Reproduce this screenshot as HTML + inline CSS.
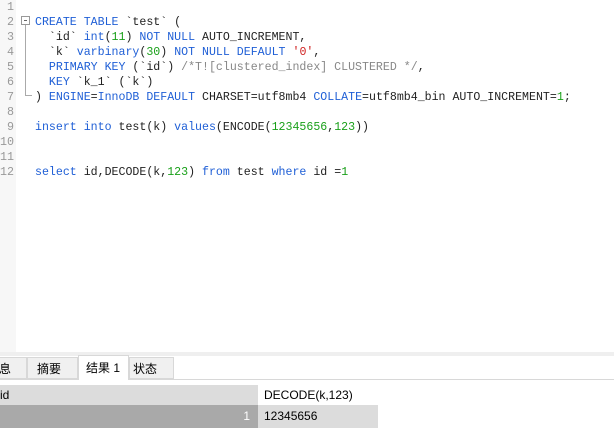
<!DOCTYPE html><html><head><style>
body{margin:0;width:614px;height:442px;overflow:hidden;background:#fff;font-family:"Liberation Sans","Noto Sans CJK SC",sans-serif;position:relative}
.g{position:absolute;left:0;top:0;width:16px;height:352px;background:#f7f7f7}
.ln{position:absolute;left:0;width:14px;text-align:right;font:11.7px "Liberation Mono",monospace;color:#999}
.c{position:absolute;left:35px;font:11.6px "Liberation Mono",monospace;color:#222;white-space:pre;line-height:15px}
.k{color:#1f5fd6}.n{color:#1aa01a}.s{color:#d02020}.m{color:#888}
.tab{position:absolute;top:357px;height:22px;background:#f0f0f0;border:1px solid #d8d8d8;font-size:12px;line-height:22px;box-sizing:border-box;padding-left:5px}
</style></head><body>
<div class="g"></div>
<div style="position:absolute;left:0;top:352px;width:614px;height:4px;background:#efefef"></div>
<div style="position:absolute;left:0;top:379px;width:614px;height:1px;background:#d8d8d8"></div>
<div class="tab" style="left:-12px;width:39px;padding-left:10px">息</div>
<div class="tab" style="left:27px;width:51px;padding-left:9px">摘要</div>
<div class="tab" style="left:78px;width:51px;top:355px;height:25px;background:#fff;border-bottom:none;padding-left:7px;line-height:24px">结果 1</div>
<div class="tab" style="left:129px;width:45px;padding-left:3px">状态</div>
<div style="position:absolute;left:0;top:385px;width:258px;height:20px;background:#dcdcdc;font-size:12px;line-height:20px">id</div>
<div style="position:absolute;left:258px;top:385px;width:120px;height:20px;background:#fff;font-size:12px;line-height:20px;padding-left:6px;box-sizing:border-box">DECODE(k,123)</div>
<div style="position:absolute;left:0;top:405px;width:258px;height:23px;background:#a9a9a9;color:#fff;font-size:12px;line-height:23px;text-align:right;padding-right:8px;box-sizing:border-box">1</div>
<div style="position:absolute;left:258px;top:405px;width:120px;height:23px;background:#dcdcdc;font-size:12px;line-height:23px;padding-left:6px;box-sizing:border-box">12345656</div>
<div style="position:absolute;left:21px;top:16px;width:9px;height:9px;border:1px solid #999;box-sizing:border-box;background:#fff"></div>
<div style="position:absolute;left:24px;top:20px;width:3px;height:1px;background:#666"></div>
<div style="position:absolute;left:25px;top:25px;width:1px;height:71px;background:#aaa"></div>
<div style="position:absolute;left:25px;top:95px;width:7px;height:1px;background:#aaa"></div>
<div style="position:absolute;top:0;left:0">
<div class="ln" style="top:0">1</div><div class="ln" style="top:15px">2</div><div class="ln" style="top:30px">3</div><div class="ln" style="top:45px">4</div><div class="ln" style="top:60px">5</div><div class="ln" style="top:75px">6</div><div class="ln" style="top:90px">7</div><div class="ln" style="top:105px">8</div><div class="ln" style="top:120px">9</div><div class="ln" style="top:135px">10</div><div class="ln" style="top:150px">11</div><div class="ln" style="top:165px">12</div>
</div>
<div class="c" style="top:0px"> 
<span class="k">CREATE TABLE</span> `test` (
  `id` <span class="k">int</span>(<span class="n">11</span>) <span class="k">NOT NULL</span> AUTO_INCREMENT,
  `k` <span class="k">varbinary</span>(<span class="n">30</span>) <span class="k">NOT NULL DEFAULT</span> <span class="s">'0'</span>,
  <span class="k">PRIMARY KEY</span> (`id`) <span class="m">/*T![clustered_index] CLUSTERED */</span>,
  <span class="k">KEY</span> `k_1` (`k`)
) <span class="k">ENGINE</span>=<span class="k">InnoDB DEFAULT</span> CHARSET=utf8mb4 <span class="k">COLLATE</span>=utf8mb4_bin AUTO_INCREMENT=<span class="n">1</span>;

<span class="k">insert into</span> test(k) <span class="k">values</span>(ENCODE(<span class="n">12345656</span>,<span class="n">123</span>))


<span class="k">select</span> id,DECODE(k,<span class="n">123</span>) <span class="k">from</span> test <span class="k">where</span> id =<span class="n">1</span>
</div>
</body></html>
